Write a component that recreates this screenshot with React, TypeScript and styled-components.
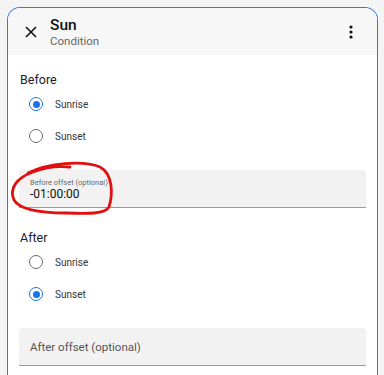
import React from "react";
import styled, { createGlobalStyle } from "styled-components";

const Global = createGlobalStyle`
  html, body { margin: 0; padding: 0; background: #f4f4f4; }
  body { font-family: Roboto, "Liberation Sans", sans-serif; color: #212121; }
`;

const Page = styled.div`
  padding: 7px 6px 0 7px;
  height: 368px;
  overflow: hidden;
`;

const Dialog = styled.div`
  position: relative;
  border: 1px solid #2a78e4;
  border-bottom: none;
  border-radius: 13px 13px 0 0;
  background: #fff;
  overflow: hidden;
  height: 380px;
`;

const Header = styled.div`
  display: flex;
  align-items: center;
  height: 47px;
  background: #f7f7f7;
  padding: 0 14px 0 11px;
`;

const IconBtn = styled.div`
  width: 24px;
  height: 24px;
  display: flex;
  align-items: center;
  justify-content: center;
`;

const Titles = styled.div`
  flex: 1;
  display: flex;
  flex-direction: column;
  margin-left: 7px;
  margin-top: 0px;
`;

const Title = styled.div`
  font-size: 15.5px;
  font-weight: 500;
  line-height: 18px;
  color: #111;
`;

const Subtitle = styled.div`
  font-size: 11.5px;
  line-height: 14px;
  color: #666;
`;

const Body = styled.div`
  display: flex;
  flex-direction: column;
  padding: 17px 11px 0 11px;
`;

const SectionLabel = styled.div<{ $top?: number }>`
  font-size: 12.5px;
  line-height: 16px;
  color: #222;
  margin-left: 1px;
  margin-top: ${(p) => p.$top ?? 0}px;
`;

const RadioRow = styled.div`
  display: flex;
  align-items: center;
  height: 32px;
  padding-left: 10px;
`;

const RadioCircle = styled.div<{ $checked?: boolean }>`
  width: 14px;
  height: 14px;
  box-sizing: border-box;
  border-radius: 50%;
  border: 1.5px solid ${(p) => (p.$checked ? "#1a73e8" : "#6b6b6b")};
  display: flex;
  align-items: center;
  justify-content: center;
  &::after {
    content: "";
    display: ${(p) => (p.$checked ? "block" : "none")};
    width: 7px;
    height: 7px;
    border-radius: 50%;
    background: #1a73e8;
  }
`;

const RadioLabel = styled.span`
  font-size: 10px;
  color: #333;
  margin-left: 12px;
`;

const Field = styled.div<{ $top: number }>`
  margin-top: ${(p) => p.$top}px;
  height: 37px;
  background: #f2f2f2;
  border-radius: 4px 4px 0 0;
  border-bottom: 1.5px solid #9a9a9a;
  display: flex;
  flex-direction: column;
  justify-content: center;
  padding: 0 11px;
`;

const FieldSmallLabel = styled.div`
  font-size: 7.5px;
  color: #6a6a6a;
  line-height: 9px;
  margin-top: 2px;
`;

const FieldValue = styled.div`
  font-size: 12px;
  color: #111;
  line-height: 14px;
`;

const FieldLabel = styled.div`
  font-size: 11.5px;
  color: #555;
`;

const Annotation = styled.svg`
  position: absolute;
  left: 0;
  top: 0;
  pointer-events: none;
`;

export default function App() {
  return (
    <>
      <Global />
      <Page>
        <Dialog>
          <Header>
            <IconBtn>
              <svg width="14" height="14" viewBox="0 0 14 14">
                <path d="M2 2 L12 12 M12 2 L2 12" stroke="#111" strokeWidth="1.6" />
              </svg>
            </IconBtn>
            <Titles>
              <Title>Sun</Title>
              <Subtitle>Condition</Subtitle>
            </Titles>
            <IconBtn>
              <svg width="4" height="14" viewBox="0 0 4 14">
                <circle cx="2" cy="2" r="1.6" fill="#111" />
                <circle cx="2" cy="7" r="1.6" fill="#111" />
                <circle cx="2" cy="12" r="1.6" fill="#111" />
              </svg>
            </IconBtn>
          </Header>
          <Body>
            <SectionLabel>Before</SectionLabel>
            <RadioRow>
              <RadioCircle $checked />
              <RadioLabel>Sunrise</RadioLabel>
            </RadioRow>
            <RadioRow>
              <RadioCircle />
              <RadioLabel>Sunset</RadioLabel>
            </RadioRow>
            <Field $top={18}>
              <FieldSmallLabel>Before offset (optional)</FieldSmallLabel>
              <FieldValue>-01:00:00</FieldValue>
            </Field>
            <SectionLabel $top={22}>After</SectionLabel>
            <RadioRow>
              <RadioCircle />
              <RadioLabel>Sunrise</RadioLabel>
            </RadioRow>
            <RadioRow>
              <RadioCircle $checked />
              <RadioLabel>Sunset</RadioLabel>
            </RadioRow>
            <Field $top={18}>
              <FieldLabel>After offset (optional)</FieldLabel>
            </Field>
          </Body>
          <Annotation width="370" height="380" viewBox="0 0 370 380">
            <path
              d="M20 165 C 40 155, 75 152, 92 159 C 105 166, 105 186, 101 199 C 97 206, 80 206, 58 205 C 35 205, 12 202, 6 192 C 1 181, 8 170, 25 164 C 38 159, 52 158, 62 159"
              fill="none"
              stroke="#e01010"
              strokeWidth="2.8"
              strokeLinecap="round"
            />
          </Annotation>
        </Dialog>
      </Page>
    </>
  );
}
